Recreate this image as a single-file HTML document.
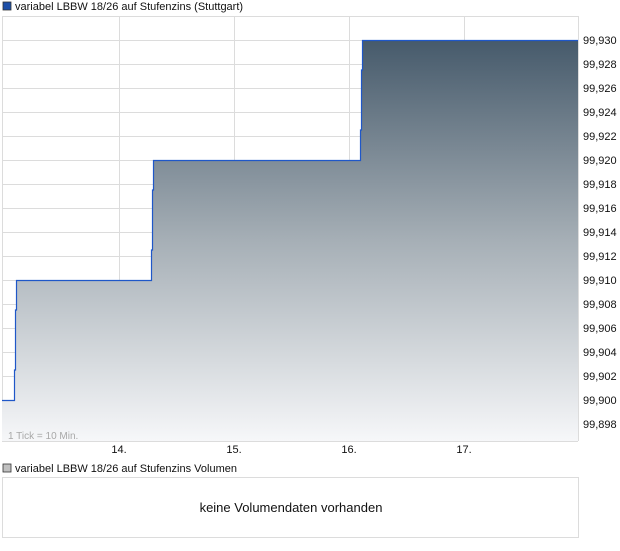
<!DOCTYPE html><html><head><style>body{margin:0;background:#fff;width:620px;height:546px;overflow:hidden;font-family:"Liberation Sans",sans-serif}</style></head><body>
<svg width="620" height="546" xmlns="http://www.w3.org/2000/svg" font-family="Liberation Sans, sans-serif">
<defs><linearGradient id="g" x1="0" y1="40" x2="0" y2="441" gradientUnits="userSpaceOnUse"><stop offset="0" stop-color="#465a6b"/><stop offset="0.5" stop-color="#a6afb6"/><stop offset="1" stop-color="#f6f7f9"/></linearGradient></defs>
<rect x="3" y="2" width="8" height="8" fill="#1d4fa8" stroke="#333" stroke-width="0.8"/>
<text x="15" y="10" font-size="11" fill="#111">variabel LBBW 18/26 auf Stufenzins (Stuttgart)</text>
<g stroke="#dcdcdc" stroke-width="1">
<line x1="2.5" y1="16" x2="2.5" y2="441"/><line x1="119.5" y1="16" x2="119.5" y2="441"/><line x1="234.5" y1="16" x2="234.5" y2="441"/><line x1="349.5" y1="16" x2="349.5" y2="441"/><line x1="464.5" y1="16" x2="464.5" y2="441"/><line x1="578.5" y1="16" x2="578.5" y2="441"/>
<line x1="2" y1="16.5" x2="578" y2="16.5"/>
<line x1="2" y1="40.5" x2="578" y2="40.5"/><line x1="2" y1="64.5" x2="578" y2="64.5"/><line x1="2" y1="88.5" x2="578" y2="88.5"/><line x1="2" y1="112.5" x2="578" y2="112.5"/><line x1="2" y1="136.5" x2="578" y2="136.5"/><line x1="2" y1="160.5" x2="578" y2="160.5"/><line x1="2" y1="184.5" x2="578" y2="184.5"/><line x1="2" y1="208.5" x2="578" y2="208.5"/><line x1="2" y1="232.5" x2="578" y2="232.5"/><line x1="2" y1="256.5" x2="578" y2="256.5"/><line x1="2" y1="280.5" x2="578" y2="280.5"/><line x1="2" y1="304.5" x2="578" y2="304.5"/><line x1="2" y1="328.5" x2="578" y2="328.5"/><line x1="2" y1="352.5" x2="578" y2="352.5"/><line x1="2" y1="376.5" x2="578" y2="376.5"/><line x1="2" y1="400.5" x2="578" y2="400.5"/><line x1="2" y1="424.5" x2="578" y2="424.5"/>
<line x1="2" y1="441.5" x2="578" y2="441.5"/>
</g>
<path d="M2,400 H14 V370 H15 V310 H16 V280 H151 V250 H152 V190 H153 V160 H360 V130 H361 V70 H362 V40 H578 V441 H2 Z" fill="url(#g)"/>
<path d="M2,400.5 H14.5 V370 H15.5 V310 H16.5 V280.5 H151.5 V250 H152.5 V190 H153.5 V160.5 H360.5 V130 H361.5 V70 H362.5 V40.5 H578" fill="none" stroke="#1f57c8" stroke-width="1.2"/>
<text x="8" y="439" font-size="10" fill="#a8a8a8">1 Tick = 10 Min.</text>
<g font-size="11" fill="#111">
<text x="583" y="44">99,930</text><text x="583" y="68">99,928</text><text x="583" y="92">99,926</text><text x="583" y="116">99,924</text><text x="583" y="140">99,922</text><text x="583" y="164">99,920</text><text x="583" y="188">99,918</text><text x="583" y="212">99,916</text><text x="583" y="236">99,914</text><text x="583" y="260">99,912</text><text x="583" y="284">99,910</text><text x="583" y="308">99,908</text><text x="583" y="332">99,906</text><text x="583" y="356">99,904</text><text x="583" y="380">99,902</text><text x="583" y="404">99,900</text><text x="583" y="428">99,898</text>
<text x="119" y="453" text-anchor="middle">14.</text><text x="234" y="453" text-anchor="middle">15.</text><text x="349" y="453" text-anchor="middle">16.</text><text x="464" y="453" text-anchor="middle">17.</text>
</g>
<rect x="3" y="464" width="8" height="8" fill="#c0c0c0" stroke="#333" stroke-width="0.8"/>
<text x="15" y="472" font-size="11" fill="#111">variabel LBBW 18/26 auf Stufenzins Volumen</text>
<rect x="2.5" y="477.5" width="576" height="60" fill="#fff" stroke="#dcdcdc"/>
<text x="291" y="512" font-size="13" fill="#111" text-anchor="middle">keine Volumendaten vorhanden</text>
</svg>
</body></html>
